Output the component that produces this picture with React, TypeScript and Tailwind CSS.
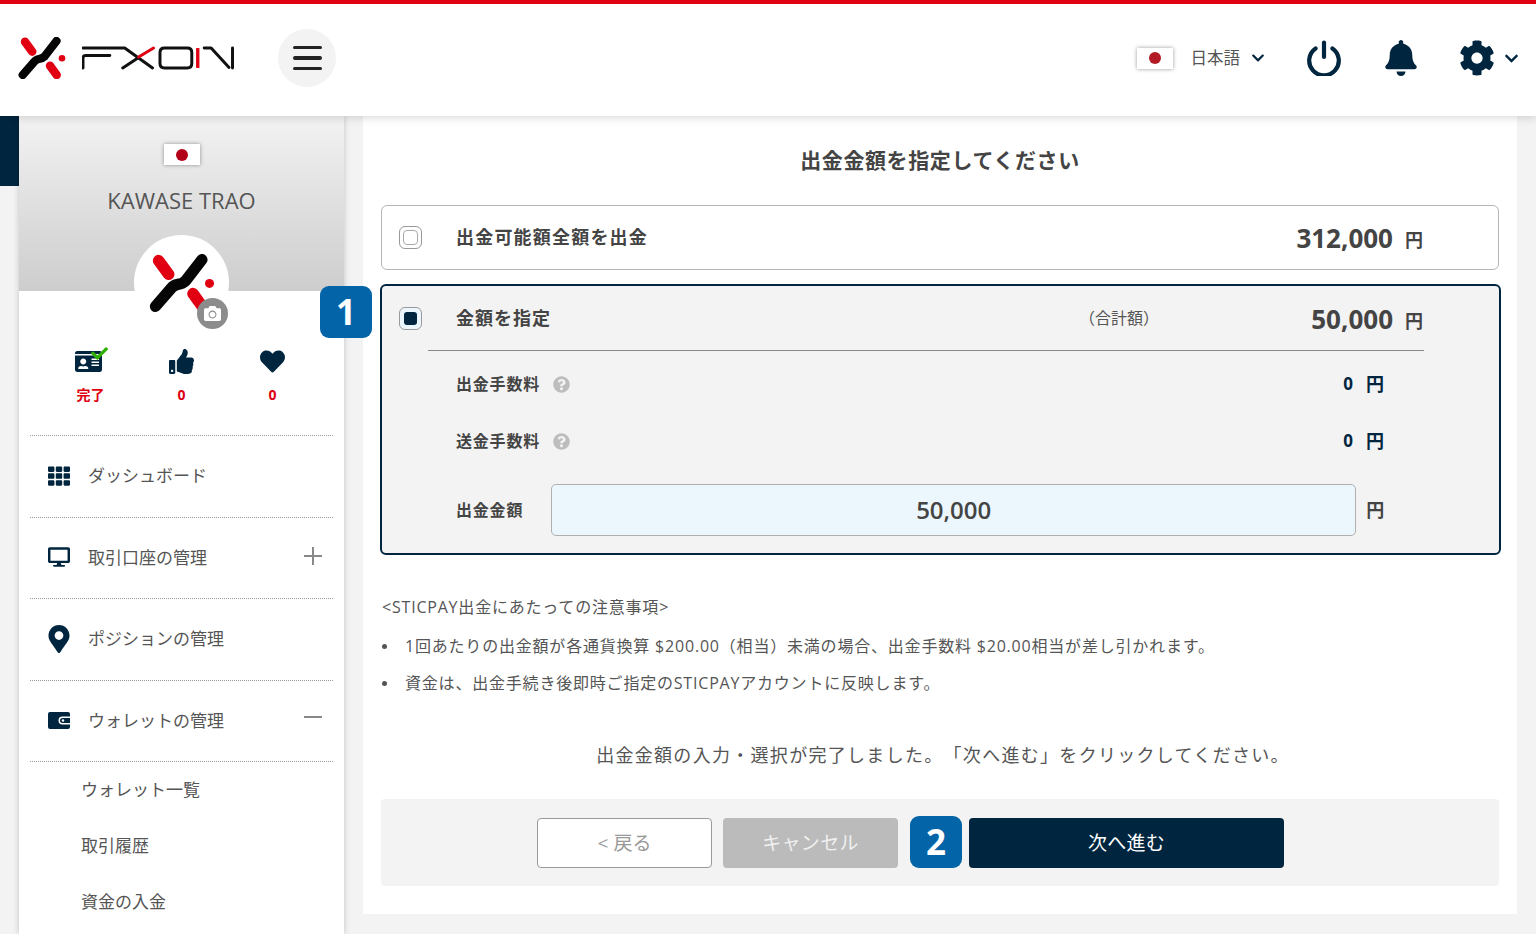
import React from "react";
import { FaBell, FaCamera, FaCheck, FaCog, FaDesktop, FaHeart, FaIdCard, FaMapMarkerAlt, FaQuestionCircle, FaThumbsUp, FaTh, FaChevronDown } from "react-icons/fa";

const XMark = ({ className }: { className: string }) => (
  <svg viewBox="0 0 48 42" className={className} fill="none" strokeLinecap="round">
    <path d="M7 4.7 L14.3 14.7" stroke="#e00012" strokeWidth="8.4" />
    <path d="M32 28.7 L38.7 38" stroke="#e00012" strokeWidth="8.4" />
    <circle cx="44" cy="21.3" r="3.3" fill="#e00012" />
    <path d="M38.5 4 L26.5 19.5 Q24.5 21.5 21 22 Q18 22.5 16 25 L4.7 38" stroke="#050505" strokeWidth="8.2" strokeLinejoin="round" />
  </svg>
);

const Logo = () => (
  <div className="flex items-center gap-[16px]">
    <XMark className="w-[48px] h-[42px]" />
    <svg viewBox="0 0 154 24" className="w-[153px] h-[24px]" fill="none" strokeWidth="3" strokeLinecap="round" strokeLinejoin="round">
      <path d="M1 22 V12 Q1 9.5 3.5 9.5 H28 M1 2 H43 L71 22 M41 22 L57 11.5" stroke="#111" />
      <path d="M57 11 L72 2" stroke="#e00012" />
      <path d="M83 2 H106 Q110.5 2 110.5 6.5 V17.5 Q110.5 22 106 22 H83 Q78.5 22 78.5 17.5 V6.5 Q78.5 2 83 2 Z" stroke="#111" />
      <path d="M116.5 2 V22" stroke="#e00012" strokeWidth="3.4" strokeLinecap="butt" />
      <path d="M123 2 H130 L148 21.5 M151.5 2 V22" stroke="#111" />
    </svg>
  </div>
);

const Flag = ({ w, h, dot, color }: { w: string; h: string; dot: string; color: string }) => (
  <div className={`${w} ${h} bg-white flex items-center justify-center shadow-[0_0_4px_rgba(0,0,0,0.4)]`}>
    <div className={`${dot} rounded-full ${color}`} />
  </div>
);

const Power = () => (
  <svg viewBox="0 0 34 36" className="w-[34px] h-[36px]" fill="none" stroke="#00263f" strokeWidth="4.2" strokeLinecap="round">
    <path d="M17 2.5 V17" />
    <path d="M8.6 8.4 A14.8 14.8 0 1 0 25.4 8.4" />
  </svg>
);

const Wallet = () => (
  <svg viewBox="0 0 22 17" className="w-[22px] h-[17px]">
    <path d="M2 0 H20 Q22 0 22 2 V4.5 H14.5 A4 4 0 0 0 14.5 12.5 H22 V15 Q22 17 20 17 H2 Q0 17 0 15 V2 Q0 0 2 0 Z" fill="#00263f" />
    <path d="M14.5 6 H22 V11 H14.5 A2.5 2.5 0 0 1 14.5 6 Z" fill="#00263f" />
    <circle cx="15" cy="8.5" r="1.2" fill="#fff" />
  </svg>
);

const Badge = ({ n, className }: { n: string; className: string }) => (
  <div className={`absolute w-[52px] h-[52px] rounded-[9px] bg-[#0464a8] text-white flex items-center justify-center text-[35px] font-bold ${className}`}>{n}</div>
);

const Row = ({ icon, label, extra }: { icon: React.ReactNode; label: string; extra?: React.ReactNode }) => (
  <div className="h-[81.5px] pb-px border-b border-dotted border-[#999] flex items-center pl-[18px] pr-[11px]">
    <div className="w-[22px] flex justify-center text-[#00263f]">{icon}</div>
    <span className="ml-[18px] flex-1 text-[17px] text-[#555] leading-none">{label}</span>
    {extra}
  </div>
);

const Yen = ({ className = "" }: { className?: string }) => <span className={`font-bold ${className}`}>円</span>;

const Check = ({ on }: { on?: boolean }) => (
  <div className={`w-[23px] h-[23px] rounded-[6px] border border-[#999] flex items-center justify-center ${on ? "bg-[#ecf7fd]" : "bg-white"}`}>
    <div className={on ? "w-[13px] h-[13px] rounded-[3px] bg-[#00263f]" : "w-[15px] h-[15px] rounded-[4px] border border-[#aaa]"} />
  </div>
);

const Fee = ({ label, cls }: { label: string; cls: string }) => (
  <div className={`flex items-center ${cls}`}>
    <span className="ml-[74px] text-[16px] font-bold text-[#444] tracking-[0.8px]">{label}</span>
    <FaQuestionCircle className="ml-[13px] w-[17px] h-[17px] text-[#bdbdbd]" />
    <span className="ml-auto text-[17px] font-bold text-[#00263f]">0</span>
    <Yen className="ml-[13px] mr-[115px] text-[18px] text-[#00263f]" />
  </div>
);

const Bullet = () => (
  <span className="w-[24px] shrink-0 pt-[9px] pl-[1px]">
    <span className="block w-[5px] h-[5px] rounded-full bg-[#555]" />
  </span>
);

export default function App() {
  return (
    <div className="relative w-full h-[934px] overflow-hidden bg-[#f3f3f3] text-[#444] font-['Open_Sans','Noto_Sans_CJK_JP',sans-serif] [text-spacing-trim:space-all]">
      <header className="relative z-10 h-[116px] bg-white border-t-[4px] border-[#e00012] shadow-[0_2px_8px_rgba(0,0,0,0.15)] flex items-center pl-[18px] pb-[4px]">
        <Logo />
        <div className="ml-[43px] w-[58px] h-[58px] rounded-full bg-[#f3f3f3] flex flex-col items-center justify-center gap-[7px]">
          <div className="w-[29px] h-[3.5px] rounded-full bg-[#222]" />
          <div className="w-[29px] h-[3.5px] rounded-full bg-[#222]" />
          <div className="w-[29px] h-[3.5px] rounded-full bg-[#222]" />
        </div>
        <div className="ml-auto flex items-center">
          <Flag w="w-[36px]" h="h-[21px]" dot="w-[12px] h-[12px]" color="bg-[#b31b24]" />
          <span className="ml-[18px] text-[16.5px] text-[#555]">日本語</span>
          <FaChevronDown className="ml-[11px] w-[14px] h-[14px] text-[#00263f]" />
          <div className="ml-[42px]"><Power /></div>
          <FaBell className="ml-[43px] w-[34px] h-[36px] text-[#00263f]" />
          <FaCog className="ml-[41px] w-[36px] h-[36px] text-[#00263f]" />
          <FaChevronDown className="ml-[9px] mr-[17px] w-[15px] h-[15px] text-[#00263f]" />
        </div>
      </header>

      <div className="flex h-[818px]">
        <div className="w-[19px] shrink-0">
          <div className="w-[19px] h-[70px] bg-[#00263f]" />
        </div>
        <aside className="relative w-[325px] shrink-0 bg-white shadow-[0_0_6px_rgba(0,0,0,0.2)]">
          <div className="h-[175px] bg-gradient-to-b from-[#f3f3f3] to-[#cdcdcd] flex flex-col items-center pt-[28px]">
            <Flag w="w-[36px]" h="h-[21px]" dot="w-[12px] h-[12px]" color="bg-[#b30019]" />
            <div className="mt-[20px] text-[22px] leading-[30px] text-[#555]">KAWASE TRAO</div>
          </div>
          <div className="absolute left-[115px] top-[119px] w-[95px] h-[95px] rounded-full bg-white flex items-center justify-center">
            <XMark className="w-[66px] h-[58px]" />
            <div className="absolute left-[63px] top-[63px] w-[31px] h-[31px] rounded-full bg-[#8c8c8c] flex items-center justify-center">
              <FaCamera className="w-[17px] h-[17px] text-white" />
            </div>
          </div>
          <div className="h-[145px] pt-[57px] mx-[11px] border-b border-dotted border-[#999] flex justify-center">
            {[
              { i: (
                <div className="relative -ml-[4px]">
                  <FaIdCard className="w-[27px] h-[27px] text-[#00263f]" />
                  <FaCheck className="absolute -right-[6px] -top-[3px] w-[17px] h-[17px] text-[#2fb000]" />
                </div>
              ), l: "完了", cls: "text-[14px]" },
              { i: <FaThumbsUp className="w-[25px] h-[25px] text-[#00263f]" />, l: "0", cls: "text-[14px]" },
              { i: <FaHeart className="w-[25px] h-[25px] text-[#00263f]" />, l: "0", cls: "text-[14px]" },
            ].map((s, k) => (
              <div key={k} className="w-[91px] flex flex-col items-center">
                <div className="h-[27px] flex items-center">{s.i}</div>
                <div className={`mt-[10px] font-bold text-[#e00012] leading-[20px] ${s.cls}`}>{s.l}</div>
              </div>
            ))}
          </div>
          <nav className="mx-[11px]">
            <Row icon={<FaTh className="w-[22px] h-[22px]" />} label="ダッシュボード" />
            <Row icon={<FaDesktop className="w-[22px] h-[22px]" />} label="取引口座の管理"
              extra={<div className="relative w-[18px] h-[18px] -mt-[3px]"><div className="absolute left-0 top-[8px] w-[18px] h-[2px] bg-[#888]" /><div className="absolute left-[8px] top-0 w-[2px] h-[18px] bg-[#888]" /></div>} />
            <Row icon={<FaMapMarkerAlt className="w-[22px] h-[28px]" />} label="ポジションの管理" />
            <Row icon={<Wallet />} label="ウォレットの管理"
              extra={<div className="w-[18px] h-[2px] bg-[#888] -mt-[6px]" />} />
          </nav>
          <div className="pl-[62px] text-[17px] text-[#555] leading-[56px]">
            <div>ウォレット一覧</div>
            <div>取引履歴</div>
            <div>資金の入金</div>
          </div>
        </aside>

        <main className="ml-[19px] w-[1154px] h-[798px] bg-white px-[18px] relative">
          <h1 className="pt-[27px] text-center text-[21px] leading-[34px] font-bold text-[#444] tracking-[0.6px]">出金金額を指定してください</h1>

          <div className="mt-[28px] h-[65px] rounded-[6px] border-[1.5px] border-[#b5b5b5] flex items-center pl-[17px]">
            <Check />
            <span className="ml-[34px] text-[18px] font-bold tracking-[1.2px] text-[#444]">出金可能額全額を出金</span>
            <span className="ml-auto mt-[2px] text-[26px] font-bold text-[#444]">312,000</span>
            <Yen className="ml-[12px] mr-[75px] mt-[5px] text-[18px]" />
          </div>

          <div className="relative mt-[14px] -ml-[1px] -mr-[2px] h-[271px] rounded-[6px] border-2 border-[#00263f] bg-[#f3f3f3]">
            <div className="h-[64px] flex items-center pl-[17px] relative">
              <Check on />
              <span className="ml-[34px] text-[18px] font-bold tracking-[1px] text-[#444]">金額を指定</span>
              <span className="ml-[528px] text-[16px] -mt-[1px] text-[#555]">（合計額）</span>
              <span className="ml-auto mt-[3px] text-[26px] font-bold text-[#444]">50,000</span>
              <Yen className="ml-[12px] mr-[76px] mt-[6px] text-[18px]" />
            </div>
            <div className="ml-[46px] mr-[75px] h-px bg-[#888]" />
            <Fee label="出金手数料" cls="mt-[21px] h-[24px]" />
            <Fee label="送金手数料" cls="mt-[33px] h-[24px]" />
            <div className="mt-[31px] flex items-center">
              <span className="ml-[74px] text-[16px] font-bold tracking-[0.8px] text-[#444]">出金金額</span>
              <div className="ml-[28px] w-[805px] h-[52px] rounded-[5px] border-[1.5px] border-[#b0b0b0] bg-[#ecf7fd] flex items-center justify-center text-[24px] font-semibold text-[#444]">50,000</div>
              <Yen className="ml-[10px] text-[18px] text-[#444]" />
            </div>
          </div>

          <div className="mt-[41px] text-[16px] text-[#555] leading-[22px] tracking-[0.8px]">
            <div className="pl-px">&lt;STICPAY出金にあたっての注意事項&gt;</div>
            <ul className="mt-[17px]">
              <li className="flex"><Bullet /><span>1回あたりの出金額が各通貨換算 $200.00（相当）未満の場合、出金手数料 $20.00相当が差し引かれます。</span></li>
              <li className="flex mt-[15px]"><Bullet /><span>資金は、出金手続き後即時ご指定のSTICPAYアカウントに反映します。</span></li>
            </ul>
          </div>

          <p className="mt-[46px] pl-[6px] text-center text-[18px] leading-[30px] tracking-[1.3px] text-[#555]">出金金額の入力・選択が完了しました。「次へ進む」をクリックしてください。</p>

          <div className="mt-[29px] h-[87px] rounded-[4px] bg-[#f3f3f3] flex items-center pl-[156px]">
            <div className="w-[175px] h-[50px] pt-[2px] rounded-[4px] border border-[#999] bg-white flex items-center justify-center text-[19px] text-[#999]">&lt; 戻る</div>
            <div className="ml-[11px] w-[175px] h-[50px] pt-[2px] rounded-[4px] bg-[#bbbbbb] flex items-center justify-center text-[19px] tracking-[0.3px] text-[#f0f0f0]">キャンセル</div>
            <div className="ml-[71px] w-[315px] h-[50px] pt-[2px] rounded-[4px] bg-[#00263f] flex items-center justify-center text-[19px] tracking-[0.3px] text-white">次へ進む</div>
          </div>
        </main>
      </div>

      <Badge n="1" className="left-[320px] top-[286px] z-20" />
      <Badge n="2" className="left-[910px] top-[816px] z-20" />
    </div>
  );
}
